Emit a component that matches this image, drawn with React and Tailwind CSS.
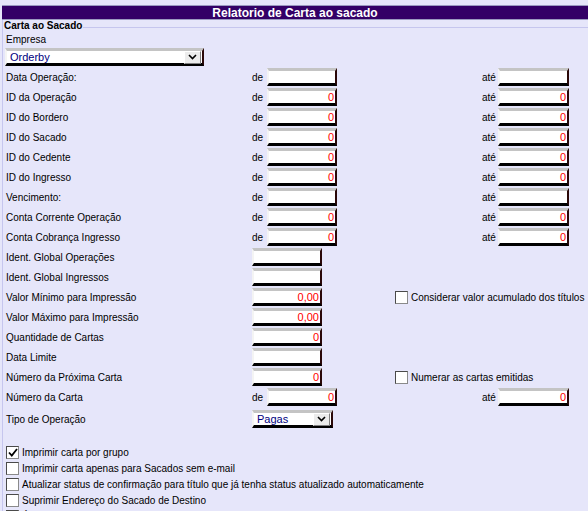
import React from 'react';

// 3D bevelled box used for text fields and selects
const bevel =
  'border-t-[3px] border-t-[#c4c4c4] border-l-[2px] border-l-[#f4f4f4] border-b-[3px] border-b-black border-r-[2px] border-r-[#2a0808] bg-white';

const Field = ({ value = '', width = 'w-[70px]' }) => (
  <div className={`${bevel} ${width} h-[18px] flex items-center justify-end pr-[1px] text-[11px] leading-none text-[#ff0000]`}>
    {value}
  </div>
);

const Chevron = () => (
  <svg width="9" height="6" viewBox="0 0 9 6">
    <path d="M1 1 L4.5 4.5 L8 1" fill="none" stroke="black" strokeWidth="1.6" />
  </svg>
);

const Select = ({ value, width }) => (
  <div className={`${bevel} ${width} h-[18px] flex items-center justify-between pl-[3px] pr-[1px]`}>
    <span className="text-[11px] leading-none text-[#000080]">{value}</span>
    <span className="w-[17px] h-[13px] flex items-center justify-center bg-[#ececec] border-t border-l border-t-white border-l-white border-b border-r border-b-[#808080] border-r-[#808080]">
      <Chevron />
    </span>
  </div>
);

const Checkbox = ({ checked }) => (
  <span className="w-[13px] h-[13px] shrink-0 bg-white border border-t-[#4a4a4a] border-l-[#4a4a4a] border-b-[#8a8a8a] border-r-[#8a8a8a] flex items-center justify-center">
    {checked && (
      <svg width="10" height="9" viewBox="0 0 10 9">
        <path d="M1 4.5 L3.8 7.5 L9 1" fill="none" stroke="black" strokeWidth="1.8" />
      </svg>
    )}
  </span>
);

const rows = [
  { label: 'Data Operação:', range: true, from: '', to: '' },
  { label: 'ID da Operação', range: true, from: '0', to: '0' },
  { label: 'ID do Bordero', range: true, from: '0', to: '0' },
  { label: 'ID do Sacado', range: true, from: '0', to: '0' },
  { label: 'ID do Cedente', range: true, from: '0', to: '0' },
  { label: 'ID do Ingresso', range: true, from: '0', to: '0' },
  { label: 'Vencimento:', range: true, from: '', to: '' },
  { label: 'Conta Corrente Operação', range: true, from: '0', to: '0' },
  { label: 'Conta Cobrança Ingresso', range: true, from: '0', to: '0' },
  { label: 'Ident. Global Operações', value: '' },
  { label: 'Ident. Global Ingressos', value: '' },
  { label: 'Valor Mínimo para Impressão', value: '0,00', check: 'Considerar valor acumulado dos títulos' },
  { label: 'Valor Máximo para Impressão', value: '0,00' },
  { label: 'Quantidade de Cartas', value: '0' },
  { label: 'Data Limite', value: '' },
  { label: 'Número da Próxima Carta', value: '0', check: 'Numerar as cartas emitidas' },
  { label: 'Número da Carta', range: true, from: '0', to: '0' },
];

const options = [
  { label: 'Imprimir carta por grupo', checked: true },
  { label: 'Imprimir carta apenas para Sacados sem e-mail' },
  { label: 'Atualizar status de confirmação para título que já tenha status atualizado automaticamente' },
  { label: 'Suprimir Endereço do Sacado de Destino' },
  { label: 'Últimas Operações' },
];

const App = () => {
  return (
    <div className="w-[588px] h-[511px] overflow-hidden bg-[#e6e6fa] pt-[5px] text-black font-['Liberation_Sans',Arial,sans-serif]">
      {/* Title bar */}
      <div className="ml-[2px] h-[15px] bg-[#330066] border-y border-[#9a9ac0] flex items-center justify-center text-white text-[12px] font-bold leading-none">
        Relatorio de Carta ao sacado
      </div>

      <div className="ml-[2px] border-l border-[#c6c6ee]">
        {/* Legend */}
        <div className="flex h-[12px]">
          <span className="pl-[1px] pr-[1px] text-[10px] font-bold leading-[12px]">Carta ao Sacado</span>
          <div className="flex-1 mt-[7px] border-t border-[#c6c6ee]" />
        </div>

        <div className="pl-[3px] mt-[2px] text-[10px] leading-[12px]">Empresa</div>
        <div className="pl-[2px] mt-[2px]">
          <Select value="Orderby" width="w-[199px]" />
        </div>

        {/* Filter rows */}
        <div className="mt-[1px]">
          {rows.map((row) => (
            <div key={row.label} className="h-[20px] flex items-center text-[10px]">
              <span className="w-[249px] pl-[3px]">{row.label}</span>
              {row.range ? (
                <>
                  <span className="w-[15px]">de</span>
                  <Field value={row.from} />
                  <span className="w-[145px]" />
                  <span className="w-[16px]">até</span>
                  <Field value={row.to} width="w-[71px]" />
                </>
              ) : (
                <>
                  <Field value={row.value} />
                  {row.check && (
                    <span className="ml-[73px] flex items-center gap-[3px]">
                      <Checkbox />
                      <span>{row.check}</span>
                    </span>
                  )}
                </>
              )}
            </div>
          ))}
          <div className="h-[20px] mt-[2px] flex items-center text-[10px]">
            <span className="w-[249px] pl-[3px]">Tipo de Operação</span>
            <Select value="Pagas" width="w-[81px]" />
          </div>
        </div>

        {/* Options */}
        <div className="mt-[15px] pl-[3px]">
          {options.map((opt) => (
            <div key={opt.label} className="h-[16px] flex items-center gap-[3px] text-[10px]">
              <Checkbox checked={opt.checked} />
              <span>{opt.label}</span>
            </div>
          ))}
        </div>
      </div>
    </div>
  );
};

export default App;
